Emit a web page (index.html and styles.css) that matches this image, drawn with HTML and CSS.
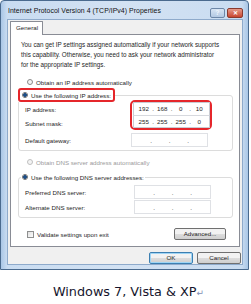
FILE: index.html
```html
<!DOCTYPE html>
<html>
<head>
<meta charset="utf-8">
<link rel="stylesheet" href="styles.css">
</head>
<body>
<div class="window">
  <div class="titlebar">
    <span class="title">Internet Protocol Version 4 (TCP/IPv4) Properties</span>
    <div class="caps">
      <span class="cap help">?</span>
      <span class="cap close">✕</span>
    </div>
  </div>
  <div class="client">
    <div class="tabs"><span class="tab">General</span></div>
    <div class="panel">
      <p class="intro">You can get IP settings assigned automatically if your network supports<br>this capability. Otherwise, you need to ask your network administrator<br>for the appropriate IP settings.</p>
      <div class="opt"><span class="radio"></span><span>Obtain an IP address automatically</span></div>
      <fieldset class="group g1">
        <legend class="legend hl"><span class="radio on"></span><span>Use the following IP address:</span></legend>
        <div class="grid">
          <span class="lbl r1">IP address:</span>
          <span class="lbl r2">Subnet mask:</span>
          <div class="redbox">
            <div class="field"><span class="seg">192</span><i>.</i><span class="seg">168</span><i>.</i><span class="seg">0</span><i>.</i><span class="seg">10</span></div>
            <div class="field"><span class="seg">255</span><i>.</i><span class="seg">255</span><i>.</i><span class="seg">255</span><i>.</i><span class="seg">0</span></div>
          </div>
          <span class="lbl r3">Default gateway:</span>
          <div class="field solo r3"><span class="seg"></span><i>.</i><span class="seg"></span><i>.</i><span class="seg"></span><i>.</i><span class="seg"></span></div>
        </div>
      </fieldset>
      <div class="opt dim"><span class="radio"></span><span>Obtain DNS server address automatically</span></div>
      <fieldset class="group g2">
        <legend class="legend"><span class="radio on"></span><span>Use the following DNS server addresses:</span></legend>
        <div class="rows">
          <div class="row"><span class="lbl">Preferred DNS server:</span><div class="field solo"><span class="seg"></span><i>.</i><span class="seg"></span><i>.</i><span class="seg"></span><i>.</i><span class="seg"></span></div></div>
          <div class="row"><span class="lbl">Alternate DNS server:</span><div class="field solo"><span class="seg"></span><i>.</i><span class="seg"></span><i>.</i><span class="seg"></span><i>.</i><span class="seg"></span></div></div>
        </div>
      </fieldset>
      <div class="bottom">
        <div class="opt chk"><span class="box"></span><span>Validate settings upon exit</span></div>
        <span class="btn adv">Advanced...</span>
      </div>
    </div>
    <div class="actions">
      <span class="btn ok">OK</span>
      <span class="btn">Cancel</span>
    </div>
  </div>
</div>
<div class="caption">Windows 7, Vista &amp; XP<span class="pm">↵</span></div>
</body>
</html>
```
FILE: styles.css
```css
* { box-sizing: border-box; }
body {
  margin: 0;
  background: #fff;
  font-family: "Liberation Sans", Arial, sans-serif;
  color: #1e1e1e;
}
.window {
  width: 249px;
  height: 270px;
  border: 1px solid #4a6a8e;
  border-radius: 4px 4px 0 0;
  background: linear-gradient(90deg, #a9c6e6 0, #c9dcf1 6px, #d3e2f3 50%, #c9dcf1 calc(100% - 6px), #a9c6e6 100%);
  padding: 0 5px 4px 6px;
  display: flex;
  flex-direction: column;
}
.titlebar {
  height: 19px;
  display: flex;
  align-items: center;
  justify-content: space-between;
  padding-left: 1px;
}
.title {
  font-size: 6.9px;
  color: #111;
  white-space: nowrap;
  letter-spacing: 0.05px;
}
.caps {
  display: flex;
  gap: 2px;
  align-self: flex-start;
  margin-top: 7px;
  margin-right: 0;
}
.cap {
  height: 10px;
  border: 1px solid #6d87a8;
  border-radius: 2px;
  font-size: 7px;
  line-height: 8px;
  text-align: center;
  font-weight: bold;
  color: #fff;
}
.help { width: 15px; background: linear-gradient(#d7e4f3, #b3c9e3); color: #eef4fb; }
.close { width: 16px; background: linear-gradient(#e59a8a, #c9452f); border-color: #8a3a2e; font-size: 6px; }
.client {
  flex: 1;
  background: #f0f0f0;
  border: 1px solid #8eaacb;
  padding: 1px 1px 0 2px;
  display: flex;
  flex-direction: column;
}
.tabs { display: flex; height: 14px; position: relative; z-index: 1; }
.tab {
  width: 33px;
  height: 14px;
  background: #fff;
  border: 1px solid #898c95;
  border-bottom: none;
  font-size: 6.2px;
  line-height: 12px;
  padding-left: 5px;
  border-radius: 1px 1px 0 0;
}
.panel {
  height: 213px;
  margin-top: -1px;
  margin-right: 1px;
  background: #fff;
  border: 1px solid #898c95;
  padding: 5px 6px 0 7px;
  font-size: 6.2px;
  display: flex;
  flex-direction: column;
}
.intro {
  margin: 0 0 0 3px;
  line-height: 10px;
  white-space: nowrap;
  font-size: 6.3px;
}
.opt {
  display: flex;
  align-items: center;
  gap: 3px;
  height: 10px;
  white-space: nowrap;
}
.intro + .opt { margin-top: 7px; margin-left: 9px; }
.radio {
  width: 6px;
  height: 6px;
  border: 1px solid #8a8a8a;
  border-radius: 50%;
  background: #f4f4f4;
  flex: none;
}
.radio.on { background: radial-gradient(circle, #1c4f8a 0 1.6px, #f4f4f4 2px); border-color: #6e6e6e; }
.dim { color: #9a9a9a; }
.dim .radio { border-color: #c0c0c0; }
.group {
  margin: 1px 0 0 0;
  border: 1px solid #dcdcdc;
  border-radius: 3px;
  padding: 0 0 0 6px;
  min-width: 0;
}
.legend {
  display: flex;
  align-items: center;
  gap: 3px;
  padding: 0 1px 0 1px;
  margin-left: -4px;
  height: 10px;
  white-space: nowrap;
}
.legend.hl {
  height: 14px;
  border: 2px solid #e5262b;
  border-radius: 3px;
  padding: 0 2px 0 2px;
  margin-left: -7px;
}
.grid {
  display: grid;
  grid-template-columns: 1fr 80px;
  grid-template-rows: 14px 15px 18px;
  align-items: center;
  margin-right: 21px;
  padding-bottom: 1px;
}
.lbl { white-space: nowrap; }
.r1 { grid-row: 1; grid-column: 1; }
.r2 { grid-row: 2; grid-column: 1; }
.lbl.r3 { grid-row: 3; grid-column: 1; }
.field.r3 { grid-row: 3; grid-column: 2; }
.redbox {
  grid-row: 1 / 3;
  grid-column: 2;
  align-self: stretch;
  border: 2px solid #e5262b;
  border-radius: 5px;
  padding: 0 1px;
  margin: -2px -1px 1px -1px;
  display: flex;
  flex-direction: column;
  justify-content: center;
}
.field {
  width: 77px;
  height: 14px;
  border: 1px solid #c9ccd3;
  background: #fff;
  display: flex;
  align-items: center;
  padding: 0 2px;
}
.redbox .field + .field { border-top-color: #d7d9de; margin-top: -1px; }
.field.solo { height: 14px; border-color: #dfe1e5; }
.seg { width: 16px; text-align: center; }
.field i { font-style: normal; width: 3px; text-align: center; }
.dim + .group { margin-top: 5px; }
.opt.dim { margin-top: 6px; margin-left: 9px; }
.rows { display: flex; flex-direction: column; gap: 1px; padding: 3px 21px 3px 0; }
.row { display: flex; justify-content: space-between; align-items: center; height: 14px; }
.bottom {
  display: flex;
  align-items: center;
  justify-content: space-between;
  margin: 10px 7px 0 9px;
}
.box {
  width: 7px;
  height: 7px;
  border: 1px solid #8e8f8f;
  background: linear-gradient(135deg, #e0e0e0, #fdfdfd);
}
.btn {
  height: 12px;
  border: 1px solid #707070;
  border-radius: 2px;
  background: linear-gradient(#f2f2f2 0 45%, #dddddd 50%, #cfcfcf 100%);
  font-size: 6.2px;
  line-height: 10px;
  text-align: center;
  width: 44px;
}
.adv { width: 52px; height: 12px; }
.actions {
  display: flex;
  justify-content: flex-end;
  gap: 4px;
  padding: 5px 0 0 0;
}
.ok { border-color: #3c7fb1; box-shadow: inset 0 0 0 1px #9fd5f5; }
.caption {
  text-align: center;
  font-family: "DejaVu Sans", Verdana, sans-serif;
  font-size: 12.8px;
  color: #15152c;
  margin-top: 14px;
  padding-left: 6px;
}
.pm { color: #7f8fb5; font-size: 9px; }
```
